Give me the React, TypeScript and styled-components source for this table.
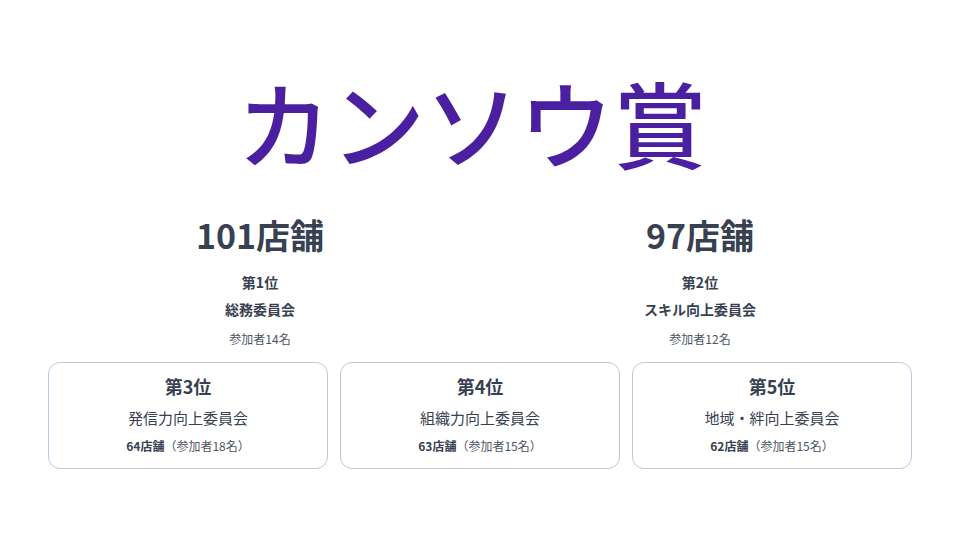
import React from "react";
import styled, { createGlobalStyle } from "styled-components";

const Global = createGlobalStyle`
  html, body { margin: 0; padding: 0; background: #ffffff; }
  body { font-family: "Noto Sans CJK JP", "Noto Sans", sans-serif; color: #374151; }
`;

const Page = styled.div`
  width: 960px;
  height: 540px;
  box-sizing: border-box;
  padding: 66px 48px 0;
  display: flex;
  flex-direction: column;
  align-items: stretch;
`;

const Title = styled.h1`
  margin: 0;
  padding-right: 16px;
  text-align: center;
  font-size: 94px;
  line-height: 110px;
  font-weight: 500;
  color: #4a1fa0;
  letter-spacing: 0;
`;

const TopRow = styled.div`
  display: grid;
  grid-template-columns: 1fr 1fr;
  gap: 16px;
  margin-top: 37px;
`;

const TopCol = styled.div`
  display: flex;
  flex-direction: column;
  align-items: center;
`;

const Stores = styled.div`
  font-size: 34px;
  line-height: 44px;
  font-weight: 700;
  color: #374151;
`;

const Rank = styled.div`
  margin-top: 12px;
  font-size: 14px;
  line-height: 26px;
  font-weight: 700;
  color: #374151;
`;

const Committee = styled.div`
  margin-top: 1px;
  font-size: 14px;
  line-height: 26px;
  font-weight: 700;
  color: #374151;
`;

const Members = styled.div`
  margin-top: 7px;
  font-size: 12px;
  line-height: 20px;
  color: #4b5563;
`;

const CardRow = styled.div`
  display: grid;
  grid-template-columns: repeat(3, 1fr);
  gap: 12px;
  margin-top: 13px;
`;

const Card = styled.div`
  height: 107px;
  box-sizing: border-box;
  border: 1.5px solid #b6c9dc;
  border-radius: 12px;
  display: flex;
  flex-direction: column;
  align-items: center;
  padding-top: 9px;
`;

const CardRank = styled.div`
  font-size: 18px;
  line-height: 28px;
  font-weight: 700;
  color: #374151;
`;

const CardName = styled.div`
  margin-top: 6px;
  font-size: 15px;
  line-height: 24px;
  color: #374151;
`;

const CardMeta = styled.div`
  margin-top: 6px;
  font-size: 12px;
  line-height: 20px;
  color: #4b5563;
  b { font-weight: 700; color: #374151; }
`;

const top = [
  { stores: 101, rank: 1, name: "総務委員会", members: 14 },
  { stores: 97, rank: 2, name: "スキル向上委員会", members: 12 },
];

const cards = [
  { stores: 64, rank: 3, name: "発信力向上委員会", members: 18 },
  { stores: 63, rank: 4, name: "組織力向上委員会", members: 15 },
  { stores: 62, rank: 5, name: "地域・絆向上委員会", members: 15 },
];

export default function App() {
  return (
    <>
      <Global />
      <Page>
        <Title>カンソウ賞</Title>
        <TopRow>
          {top.map((t) => (
            <TopCol key={t.rank}>
              <Stores>{t.stores}店舗</Stores>
              <Rank>第{t.rank}位</Rank>
              <Committee>{t.name}</Committee>
              <Members>参加者{t.members}名</Members>
            </TopCol>
          ))}
        </TopRow>
        <CardRow>
          {cards.map((c) => (
            <Card key={c.rank}>
              <CardRank>第{c.rank}位</CardRank>
              <CardName>{c.name}</CardName>
              <CardMeta>
                <b>{c.stores}店舗</b>（参加者{c.members}名）
              </CardMeta>
            </Card>
          ))}
        </CardRow>
      </Page>
    </>
  );
}
